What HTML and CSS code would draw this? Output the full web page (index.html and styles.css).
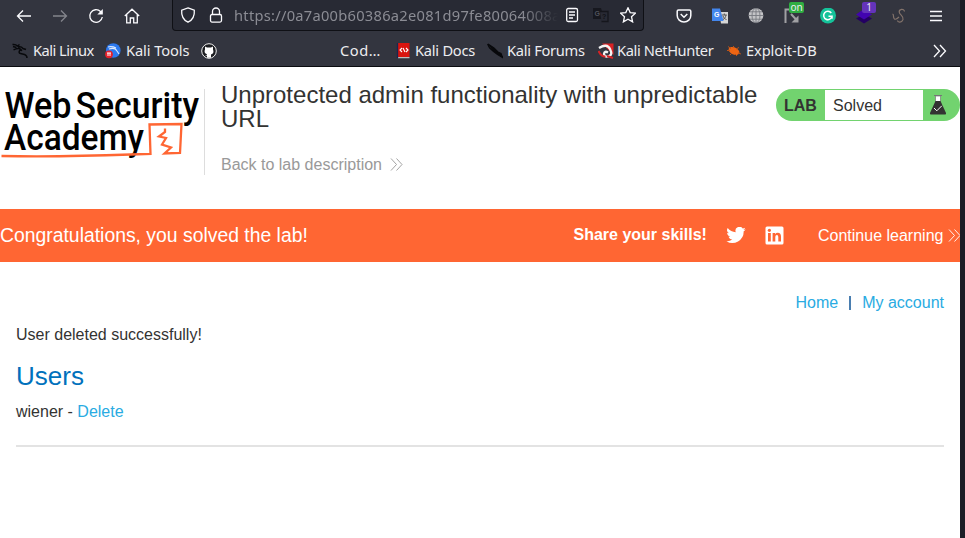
FILE: index.html
```html
<!DOCTYPE html>
<html lang="en">
<head>
<meta charset="utf-8">
<title>Unprotected admin functionality with unpredictable URL</title>
<link rel="stylesheet" href="styles.css">
</head>
<body>
<div class="window">
<header class="chrome">
  <div class="toolbar">
    <div class="nav-buttons">
      <span class="btn"><svg width="16" height="16" viewBox="0 0 16 16"><path d="M15 8H1.500M7 2.500 1.500 8 7 13.500"/></svg></span>
      <span class="btn disabled"><svg width="16" height="16" viewBox="0 0 16 16"><path d="M1 8h13.500M9 2.500 14.500 8 9 13.500"/></svg></span>
      <span class="btn"><svg width="16" height="16" viewBox="0 0 16 16"><path d="M14.300 9A6.300 6.300 0 1 1 12.500 3.500L14 5"/><path d="M14.800 1v5.500H9.300z" fill="#fbfbfe" stroke="none"/></svg></span>
      <span class="btn"><svg width="16" height="16" viewBox="0 0 16 16"><path d="M.8 8 8 1.200 15.200 8M2.700 6.500v8.300h3.600V10h3.400v4.800h3.600V6.500"/></svg></span>
    </div>
    <div class="urlbar">
      <span class="slot"><svg width="16" height="16" viewBox="0 0 16 16"><path d="M8 .9 14.300 3.200C14.800 9 12.500 13 8 15.200 3.500 13 1.200 9 1.700 3.200z"/></svg></span>
      <span class="slot"><svg width="16" height="16" viewBox="0 0 16 16"><rect x="2.500" y="7.500" width="11" height="7.600" rx="1.500"/><path d="M4.500 7.500v-3a3.500 3.500 0 0 1 7 0v3"/></svg></span>
      <span class="url">https://0a7a00b60386a2e081d97fe80064008a</span>
      <span class="slot"><svg width="16" height="16" viewBox="0 0 16 16"><rect x="2.700" y="1.500" width="10.800" height="13" rx="1.500"/><path d="M5 5h6M5 8h6M5 11h4"/></svg></span>
      <span class="slot"><svg width="17" height="16" viewBox="0 0 17 16"><path d="M1 1h8l3 11H1z" fill="#17181f" stroke="none"/><path d="M8 4.500h8v10H9.500" fill="#282a34" stroke="#15161c"/><text x="2.500" y="8.500" class="glyph dark">G</text><text x="10" y="12" class="glyph ink">?</text></svg></span>
      <span class="slot"><svg width="16" height="16" viewBox="0 0 16 16"><path d="m8 .8 2.200 4.800 5.200.6-3.900 3.500 1.100 5.200L8 12.300l-4.600 2.600 1.100-5.200L.6 6.200l5.200-.6z"/></svg></span>
    </div>
    <div class="extensions">
      <span class="btn"><svg width="16" height="16" viewBox="0 0 16 16"><path d="M2.500 2h11q1.300 0 1.300 1.300V7.500a6.800 6.500 0 0 1-13.600 0V3.300Q1.200 2 2.500 2zM4.700 6 8 9.200 11.300 6" stroke-width="1.500"/></svg></span>
      <span class="btn"><svg width="16" height="16" viewBox="0 0 16 16"><path d="M7 4h9v11.500H9z" fill="#d5d5d5" stroke="none"/><path d="M0 .5h8L11.500 13H0z" fill="#4386ed" stroke="none"/><path d="M9.800 7h5M12.300 5.500V7M14 7c-.5 2.500-1.500 3.800-3 4.500M11 8c1 2.500 2 3 3.500 3.500" stroke="#555" stroke-width="1"/><text x="2" y="8.800" class="glyph">G</text></svg></span>
      <span class="btn"><svg width="16" height="16" viewBox="0 0 16 16"><circle cx="8" cy="7.500" r="7.300" fill="#c4c4c7" stroke="none"/><path d="M8 0v15M1 7.500h14M2 3.800h12M2 11.200h12" stroke="#777980" stroke-width=".9"/><ellipse cx="8" cy="7.500" rx="4" ry="7.300" stroke="#777980" stroke-width=".9"/></svg></span>
      <span class="btn"><svg width="16" height="16" viewBox="0 0 16 16"><path d="M1.500 15V1.500H7M7 6l6 6.500" stroke="#a0a0a3" stroke-width="2"/><path d="M14.500 7.500v7h-7z" fill="#a0a0a3" stroke="none"/></svg><b class="badge on">on</b></span>
      <span class="btn"><svg width="16" height="16" viewBox="0 0 16 16"><circle cx="8" cy="7.500" r="8" fill="#15c39a" stroke="none"/><path d="M11.300 5A4.200 4.200 0 1 0 12 8.200H8.500M12 8.200v2.500" stroke="#fff" stroke-width="1.500"/></svg></span>
      <span class="btn"><svg width="16" height="16" viewBox="0 0 16 16"><path d="m8 6 8 4.500-8 5-8-5z" fill="#240063" stroke="none"/><path d="m8 1 8 5.500-8 5-8-5z" fill="#4204b0" stroke="none"/></svg><b class="badge count">1</b></span>
      <span class="btn"><svg width="16" height="16" viewBox="0 0 16 16"><path d="M12.500 3.500C12 0 7 1 7.200 4 7.500 7 12 8 11 11.500 9.500 15.500 5.500 14 5.500 12.500M.5 6c2 .5 0 3.500 2 5 1.500 1 3-.5 4.500-2" stroke="#83736b" stroke-width="1.200"/></svg></span>
      <span class="btn"><svg width="16" height="16" viewBox="0 0 16 16"><path d="M2 3.500h12M2 8h12M2 12.500h12"/></svg></span>
    </div>
  </div>
  <nav class="bookmarks">
    <span class="mark linux"><svg width="17" height="16" viewBox="0 0 17 16"><path d="M.5 1.500q3-.5 5 1.500l2-1.500M1 3.500l3.500 1M1.500 7q3-2 6-1.500l2.500 2-2-.5Q6 10 8.500 10.500l4 1q2.500 1 2.500 3.500M6 4q3-1 5 1.500l3 1" stroke="#08090c" stroke-width="1.500"/></svg>Kali Linux</span>
    <span class="mark tools"><svg width="16" height="16" viewBox="0 0 16 16"><circle cx="8.300" cy="7.500" r="7.300" fill="#2c79ef" stroke="none"/><path d="M3 4q4-1 8 1M4 6q6-2 8 2l2 3" stroke="#dceaff" stroke-width="1.100"/><circle cx="4" cy="11.300" r="3.900" fill="#e5202a" stroke="none"/><path d="M2 10h4M3 10v3M5 10v3" stroke="#fff" stroke-width="1"/></svg>Kali Tools</span>
    <span class="mark"><svg width="16" height="16" viewBox="0 0 16 16"><circle cx="8" cy="8" r="7.300" fill="#1b1c20" stroke="#eee" stroke-width="1"/><path d="M4 3.500 6 4.500h4l2-1v3q1.500 4-2 5v3.200H6v-2l-2-.5 2-.4v-.5Q2.500 10 4 6.500z" fill="#fff" stroke="none"/></svg></span>
    <span class="mark cod">Cod…</span>
    <span class="mark docs"><svg width="15" height="16" viewBox="0 0 15 16"><path d="M2 0h11.500v14H2z" fill="#d9140f" stroke="none"/><path d="M2 14.700h11.500" stroke="#ddd" stroke-width="1"/><path d="M1.500 0v15" stroke="#1b2650"/><path d="M6 5 4 7l2 2M10 5l2 2-2 2M7 5l2 4" stroke="#fff" stroke-width="1.100"/></svg>Kali Docs</span>
    <span class="mark forums"><svg width="16" height="16" viewBox="0 0 16 16"><path d="M.5 1l2 4 4 3.500M1 1l6 4 4 4 3 1.500 1.500 4-5-3-4-3" fill="#08090c" stroke="#08090c" stroke-width="1.200"/></svg>Kali Forums</span>
    <span class="mark hunter"><svg width="16" height="16" viewBox="0 0 16 16"><path d="M4 .5h11.500V12z" fill="#d92225" stroke="none"/><path d="M1 5Q9 0 12 6t-1 7Q7 15 6 11q.5-3.500 4-1.500" stroke="#f4f4f4" stroke-width="2.300"/><path d="M.5 8q3 6 7 5.500M9 13l6 2" stroke="#d92225" stroke-width="2"/></svg>Kali NetHunter</span>
    <span class="mark exploit"><svg width="16" height="16" viewBox="0 0 16 16"><ellipse cx="8" cy="8" rx="5.800" ry="3.500" transform="rotate(24 8 8)" fill="#ee6513" stroke="none"/><path d="M2 3.500l3 2M7 3l2 2M10 6l3-1.500M1 7.500h3M4 12l2-2M12 10l3 1M9 11l2 2" stroke="#b9531a" stroke-width="1"/></svg>Exploit-DB</span>
    <svg class="more" width="14" height="14" viewBox="0 0 14 14"><path d="m1 1 5.500 6L1 13M7 1l5.500 6L7 13"/></svg>
  </nav>
</header>
<main class="page">
  <section class="lab-header">
    <svg class="logo" width="204" height="86" viewBox="0 0 204 86">
      <text x="4.500" y="28.500" font-size="37" textLength="67" lengthAdjust="spacingAndGlyphs">Web</text>
      <text x="75.500" y="28.500" font-size="37" textLength="123.500" lengthAdjust="spacingAndGlyphs">Security</text>
      <text x="4" y="61" font-size="36" textLength="140" lengthAdjust="spacingAndGlyphs">Academy</text>
      <path class="spark" d="M1.500 67q60 1 129-1.500l20-.5L149.500 35.500 181.500 35 180 64 164.500 64.500 171 58.500 162 55.500 166 49 159 47.500 165 43V39.500"/>
    </svg>
    <div class="title">
      <h2>Unprotected admin functionality with unpredictable URL</h2>
      <a class="back">Back to lab description<svg width="13" height="13" viewBox="0 0 13 13"><path d="m1 .5 5.500 6-5.500 6M6.500.5l5.500 6-5.500 6"/></svg></a>
    </div>
    <div class="status"><b>LAB</b><span>Solved</span><svg width="18" height="20" viewBox="0 0 18 20"><path d="M5 .5h8" stroke="#777"/><path d="M6.500 1h5v6h-5z" fill="#fff" stroke="#777" stroke-width=".7"/><path d="M6.500 6h5L17 18q.3 1.500-1 1.500H2Q.7 19.500 1 18z" fill="#333332" stroke="none"/><path d="m5 13 2.800 2.800 5-5" stroke="#fff"/></svg></div>
  </section>
  <section class="banner">
    <p>Congratulations, you solved the lab!</p>
    <b>Share your skills!</b>
    <svg class="bird" width="20" height="17" viewBox="0 0 24 20"><path d="M23.600 2.400c-.8.400-1.700.7-2.700.8 1-.6 1.700-1.500 2.100-2.600-.9.500-1.900.9-3 1.100A4.700 4.700 0 0 0 11.700 6 13.500 13.500 0 0 1 2 1.100 4.700 4.700 0 0 0 3.500 7.400c-.8 0-1.500-.2-2.100-.6 0 2.400 1.600 4.300 3.800 4.700-.7.200-1.400.2-2.100.1.600 1.900 2.300 3.300 4.400 3.300A9.600 9.600 0 0 1 .5 16.900 13.500 13.500 0 0 0 21.200 5c1-.7 1.800-1.500 2.400-2.600z"/></svg>
    <svg class="linkedin" width="19" height="19" viewBox="0 0 19 19"><rect x=".5" y=".5" width="18" height="18" rx="1.500" fill="#fff"/><path d="M3 7h2.800v8.500H3zM7.600 7h2.600v1.200Q11 6.800 12.800 6.800q3.200 0 3.200 4v4.700h-2.700V11q0-2-1.400-2-1.600 0-1.600 2v4.500H7.600z" fill="#f63"/><circle cx="4.400" cy="4.300" r="1.600" fill="#f63"/></svg>
    <a class="continue">Continue learning<svg width="13" height="13" viewBox="0 0 13 13"><path d="m1 .5 5.500 6-5.500 6M6.500.5l5.500 6-5.500 6"/></svg></a>
  </section>
  <section class="content">
    <nav class="links"><a>Home</a><i></i><a>My account</a></nav>
    <p class="message">User deleted successfully!</p>
    <h1>Users</h1>
    <p class="user">wiener - <a>Delete</a></p>
    <hr>
  </section>
</main>
</div>
</body>
</html>
```
FILE: styles.css
```css
* { box-sizing: border-box; }
body { margin: 0; background: #1c1d26; font: 16px/24px "Liberation Sans", Arial, sans-serif; color: #333332; }
.window { width: 960px; height: 538px; overflow: hidden; background: #fff; }
h1, h2, p { margin: 0; font-weight: normal; }

.chrome { height: 67px; background: #33353f; border-bottom: 1px solid #0b0c10; color: #ededf0; font: 14.67px/20px "Noto Sans", sans-serif; }
.chrome svg { fill: none; stroke: #fbfbfe; stroke-width: 1.3; flex: none; }
.toolbar { display: flex; height: 31px; padding-left: 6px; }
.nav-buttons, .extensions { display: flex; }
.btn { position: relative; width: 36px; display: flex; align-items: center; justify-content: center; }
.disabled { opacity: .4; }
.urlbar { display: flex; width: 472px; margin: 0 22px 0 22px; padding: 0 1px; background: #282a34; border: 1px solid #0f1015; border-top: 0; border-radius: 0 0 4px 4px; }
.slot { width: 28px; flex: none; display: flex; align-items: center; justify-content: center; }
.url { flex: 1; min-width: 0; padding-left: 4px; overflow: hidden; white-space: nowrap; line-height: 31px; letter-spacing: .27px; color: #8b8c94; -webkit-mask-image: linear-gradient(90deg, #000 calc(100% - 36px), transparent); mask-image: linear-gradient(90deg, #000 calc(100% - 36px), transparent); }
.chrome .glyph { font: bold 7px "Liberation Sans", sans-serif; fill: #fff; stroke: none; }
.chrome .dark { fill: #50525c; }
.chrome .ink { fill: #111218; }
.badge { position: absolute; top: 2px; left: 15px; width: 15px; height: 11px; border-radius: 2px; font: 10px/10px "Noto Sans", sans-serif; text-align: center; }
.on { background: #2fae42; }
.count { background: #6434ba; left: 16px; width: 14px; }
.bookmarks { display: grid; grid-template-columns: 93px 96px 139px 56px 91px 111px 128px 1fr 14px; padding: 3px 13px 0 12px; height: 35px; align-items: center; }
.mark { display: flex; align-items: center; gap: 4px; white-space: nowrap; }
.mark svg { position: relative; top: 1px; }
.linux { letter-spacing: -.52px; }
.tools { letter-spacing: -.1px; gap: 5px; }
.cod { letter-spacing: .5px; }
.docs { letter-spacing: -.25px; }
.forums { letter-spacing: -.3px; }
.hunter { letter-spacing: -.4px; gap: 3px; }
.exploit { letter-spacing: -.1px; }
.bookmarks .more { margin-top: 1px; }

.lab-header { display: flex; height: 142px; padding-top: 22px; }
.logo { overflow: visible; border-right: 1px solid #ddd; box-sizing: content-box; flex: none; font-family: Roboto, sans-serif; font-weight: 500; fill: #000; }
.spark { fill: none; stroke: #f63; stroke-width: 2.3; }
.title { width: 571px; flex: none; padding: 0 16px; }
.title h2 { font-size: 24px; line-height: 24px; margin-top: -6px; }
.back { display: flex; align-items: center; gap: 8px; margin-top: 22px; color: #999; }
.back svg, .continue svg { position: relative; top: -1px; fill: none; stroke: currentColor; stroke-width: .9; }
.status { display: flex; align-items: center; width: 184px; height: 32px; background: #72d36f; border-radius: 16px; overflow: hidden; }
.status b { width: 49px; padding: 2px 0 0 8px; }
.status span { width: 98px; height: 30px; padding-left: 8px; line-height: 31px; background: #fff; }
.status svg { margin-left: 6px; fill: none; }

.banner { display: flex; align-items: center; height: 53px; background: #f63; color: #fff; white-space: nowrap; }
.banner p { width: 573.5px; font-size: 19.36px; padding-bottom: 2px; }
.banner b { width: 152.5px; padding-bottom: 2px; }
.bird { fill: #fff; }
.linkedin { margin-left: 19px; }
.continue { display: flex; align-items: center; gap: 5px; margin-left: 34px; }
.banner b, .banner p, .bird, .linkedin, .continue { flex: none; }
.continue svg { flex: none; top: 0; }

.content { padding: 29px 16px 0; }
.links { display: flex; justify-content: flex-end; align-items: center; }
.content a { color: #29abe2; }
.links i { width: 2px; height: 14px; margin: 0 11px; background: #4a7eb0; }
.message { margin-top: 8px; }
.content h1 { margin-top: 13px; font-size: 26px; line-height: 32px; color: #0071bc; }
.user { margin-top: 8px; }
.content hr { margin: 21px 0 0; height: 2px; border: 0; background: #e3e3e3; }
```
